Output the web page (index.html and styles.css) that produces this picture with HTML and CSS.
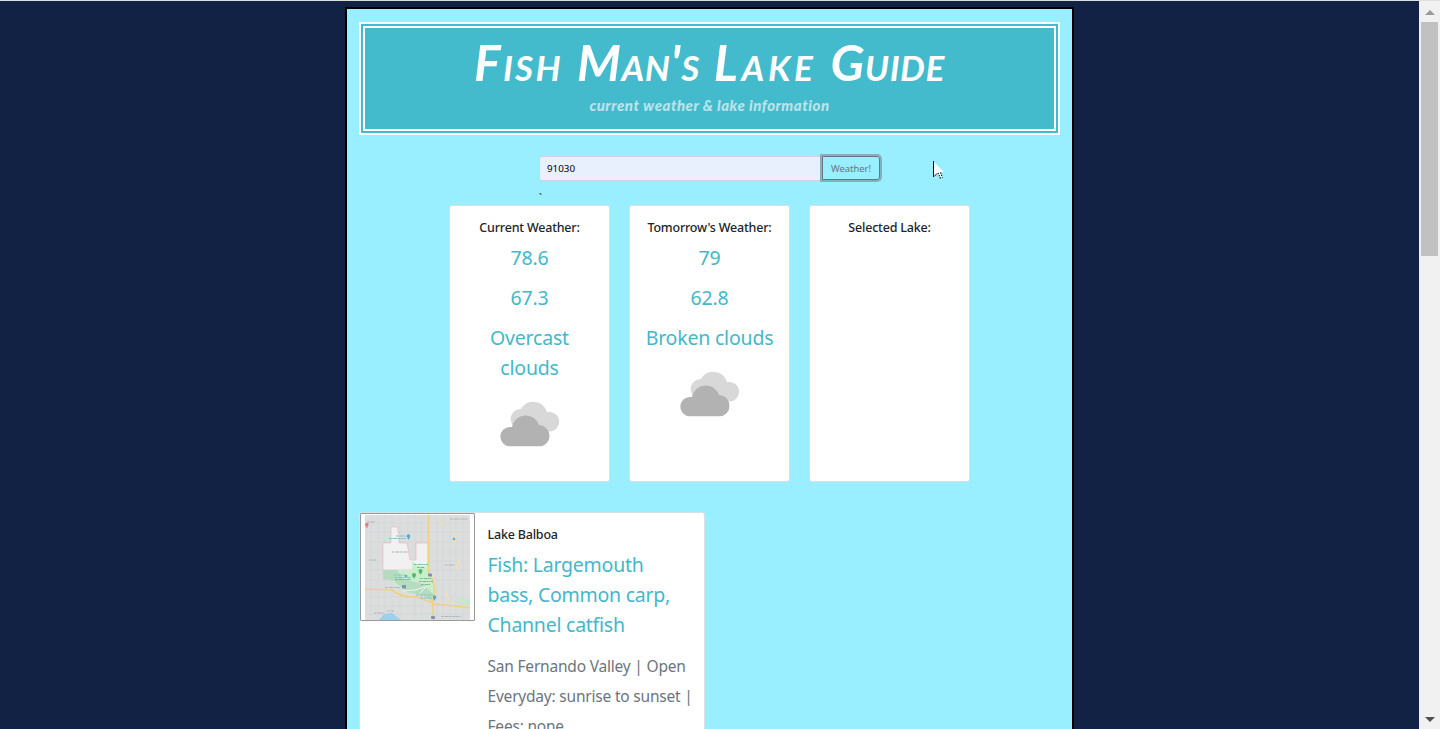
FILE: index.html
```html
<!DOCTYPE html>
<html lang="en">
<head>
<meta charset="utf-8">
<title>Fish Man's Lake Guide</title>
<link rel="stylesheet" href="styles.css">
</head>
<body>
<svg class="defs" aria-hidden="true">
  <symbol id="clouds" viewBox="0 0 60 46">
    <path class="cloud-back" d="M20 28a10 10 0 0 1-3-19.300 10 10 0 0 1 4-.7 14.200 14.200 0 0 1 26 3.200 9.800 9.800 0 1 1 2 19.300H20z"/>
    <path class="cloud-front" d="M10 45.300a9.700 9.700 0 0 1 0-19.400h2a14 14 0 0 1 27-2q10 1 10.500 11.200a10 10 0 0 1-10 10.200z"/>
  </symbol>
</svg>
<div class="window">
  <main class="stage">
    <div class="container">
      <header class="banner">
        <h1 class="title"><span class="wide">Fish</span> <span>Man's</span> <span class="wider">Lake</span> <span>Guide</span></h1>
        <p class="tagline">current weather &amp; lake information</p>
      </header>
      <form class="search">
        <input class="zip" type="text" value="91030" aria-label="Zip code">
        <button class="go" type="button">Weather!</button>
      </form>
      <p class="tick">`</p>
      <section class="cards">
        <article class="card">
          <h2 class="card-title">Current Weather:</h2>
          <p class="reading">78.6</p>
          <p class="reading">67.3</p>
          <p class="reading">Overcast clouds</p>
          <svg class="weather-icon"><use href="#clouds"/></svg>
        </article>
        <article class="card">
          <h2 class="card-title">Tomorrow's Weather:</h2>
          <p class="reading">79</p>
          <p class="reading">62.8</p>
          <p class="reading">Broken clouds</p>
          <svg class="weather-icon"><use href="#clouds"/></svg>
        </article>
        <article class="card">
          <h2 class="card-title">Selected Lake:</h2>
        </article>
      </section>
      <section class="lake">
        <div class="map-button">
          <svg class="map" viewBox="0 0 105 105">
            <rect width="105" height="105" fill="#dcdddd"/>
            <g stroke="#d3d5d6" stroke-width=".6" fill="none">
              <path d="M6 0v105M13 0v105M20 0v105M27 0v105M35 0v105M43 0v46M50 0v105M57 0v105M72 0v105M78 0v105M85 0v105M91 0v105M98 0v105M0 8h105M0 17h105M0 27h105M0 37h105M0 46h105M0 55h105M0 65h105M0 82h105M0 91h105M0 99h105"/>
            </g>
            <path d="M26 12h7v6h1v10h8l3 17h6V28h12v27H18V28h8z" fill="#f1f1f2" stroke="#e9bcbc" stroke-width=".7"/>
            <path d="M18 55h29V46l6 5h9l1 10 7 9-2 16-17-8-12-2-19-14z" fill="#c8efca"/>
            <path d="M18 55h14l6 9 20 5 10 10-1 7-10-6-15-3-13-11-11-2z" fill="#b5dcc0"/>
            <path d="M38 76l12-1 10-3M55 78l7-7" stroke="#f3f6e9" stroke-width="1" fill="none"/>
            <path d="M14 105l5-6 8-1 9 7z" fill="#9bd1ec"/>
            <path d="M90 87l6-5 6 3 3-1v6l-9-1z" fill="#c6e7c9"/>
            <path d="M63.500 0v57q6 10 6 19l-2 11 1 18M0 74l27 1q9 8 26 7l17 7 20 2 15 2" fill="none" stroke="#efd184" stroke-width="1.700"/>
            <path d="M76 6l2 4M91 18l-2 10M94 45l-3 10M80 78l4 6" stroke="#efe1b3" stroke-width="2"/>
            <g fill="#53aecb"><circle cx="43.500" cy="21" r="1.800"/><path d="M42 22h3l-1.500 3z"/><circle cx="69.500" cy="82" r="1.800"/><path d="M68 83h3l-1.500 3z"/><circle cx="89" cy="24" r="1.200"/><circle cx="41" cy="61" r="1.300"/></g>
            <g fill="#52b96d"><circle cx="49" cy="60" r="2"/><path d="M47.500 61h3l-1.500 3z"/><circle cx="55.500" cy="56" r="2"/><path d="M54 57h3l-1.500 3z"/></g>
            <g fill="#eb7c7c"><circle cx="1.800" cy="9.500" r="1.700"/><path d="M.5 10.500h2.800l-1.400 3z"/></g>
            <g fill="#7d91b5"><rect x="63" y="58.500" width="4" height="3" rx="1"/><rect x="66" y="101" width="4" height="3" rx="1"/><rect x="37" y="70" width="4" height="3.500" rx="1"/></g>
            <g fill="none" stroke-width="1.100" stroke-dasharray="2 .5 1 .6 3 .5">
              <path d="M31 21h10M24 23.500h17M51 80h17M55 83h12M29 60h11M30 62.500h16" stroke="#83bfc6"/>
              <path d="M49 49.500h14M52 52.500h7M55 63.500h11M54 66.500h14M56 69.500h9M30 64.500h16" stroke="#79b691"/>
              <path d="M27 37h16M2 7h8M85 4h18M4 45h7M9 98h10M20 72.500h15M76 101.500h20M80 50h10M22 96h7" stroke="#adb4c3"/>
            </g>
          </svg>
        </div>
        <div class="lake-info">
          <h2 class="card-title">Lake Balboa</h2>
          <p class="fish">Fish: Largemouth<br>bass, Common carp,<br>Channel catfish</p>
          <p class="details">San Fernando Valley | Open<br>Everyday: sunrise to sunset |<br>Fees: none</p>
        </div>
      </section>
    </div>
  </main>
  <aside class="scrollbar" aria-hidden="true">
    <svg class="arrow" viewBox="0 0 10 5"><path d="M5 0l5 5H0z" fill="#9a9a9a"/></svg>
    <div class="thumb"></div>
    <svg class="arrow" viewBox="0 0 10 5"><path d="M0 0h10L5 5z" fill="#505050"/></svg>
  </aside>
</div>
<svg class="cursor" viewBox="0 0 12 20"><path d="M1 1l10 10H7l2 5-2 1-2-5-4 4z" fill="#fff"/><path d="M.5 0v16M1 15.500l3-3" stroke="#000" fill="none"/><path d="M5 12l2.500 5.500M7.500 11.500l2 5" stroke="#000" stroke-width="1.200" stroke-dasharray="1.200 1.200"/></svg>
</body>
</html>
```
FILE: styles.css
```css
* { box-sizing: border-box; }
body {
  margin: 0;
  height: 729px;
  overflow: hidden;
  background: #112244;
  font-family: "Noto Sans", "Open Sans", sans-serif;
  color: #212529;
}
h1, h2, p { margin: 0; }
.defs { position: absolute; width: 0; height: 0; }
.window { display: flex; height: 729px; border-top: 1px solid #dcdfdf; overflow: hidden; }
.stage { flex: 1; display: flex; justify-content: center; padding-top: 6px; }
.container {
  width: 729px;
  height: 900px;
  padding: 13px 12px 0;
  border: 2px solid #000;
  background: #99eeff;
}
.banner {
  height: 113px;
  border: 6px double #fff;
  background: #44bbcc;
  text-align: center;
}
.title {
  display: flex;
  justify-content: center;
  gap: 14px;
  height: 64px;
  font-family: Lato, sans-serif;
  font-size: 50px;
  line-height: 68px;
  font-weight: 700;
  font-style: italic;
  font-variant: small-caps;
  letter-spacing: .6px;
  color: #fff;
}
.title .wide { letter-spacing: 2.300px; }
.title .wider { letter-spacing: 3.600px; }
.tagline {
  font-family: Lato, sans-serif;
  font-size: 15px;
  line-height: 26px;
  font-weight: 900;
  font-style: italic;
  letter-spacing: .5px;
  color: #b9e4eb;
}
.search { display: flex; width: 342px; height: 26px; margin: 20px 0 0 180px; }
.zip {
  width: 282px;
  height: 25px;
  margin-top: 1px;
  padding: 0 7px;
  border: 1px solid #ced4da;
  border-radius: 3px 0 0 3px;
  background: #e8f0fe;
  font: 9.800px "Noto Sans", sans-serif;
  color: #000;
}
.go {
  width: 58px;
  height: 24px;
  margin: 1px 0 0 1px;
  padding: 0;
  border: 1px solid #6c757d;
  border-radius: 0 3px 3px 0;
  background: transparent;
  box-shadow: 0 0 0 2px #84b0bd;
  font: 9.400px "Noto Sans", sans-serif;
  color: #6c757d;
}
.tick { height: 24px; margin-left: 180px; padding-top: 10px; font-size: 10px; line-height: 15px; }
.cards { display: flex; justify-content: center; gap: 19px; height: 277px; }
.card {
  width: 161px;
  padding: 14px 15px;
  border: 1px solid #d5e1e4;
  border-radius: 3px;
  background: #fff;
  text-align: center;
}
.card-title { font-size: 12.500px; line-height: 16px; font-weight: 500; letter-spacing: -.2px; }
.reading {
  margin: 0 -6px 10px;
  padding: 0 14px;
  font-size: 19.500px;
  line-height: 30px;
  letter-spacing: -.2px;
  color: #44b7cb;
}
.card-title + .reading { margin-top: 7px; }
.card:nth-child(2) .reading { padding: 0; }
.weather-icon { display: block; width: 60px; height: 46px; margin: 18px auto 0; }
.cloud-back { fill: #d8d8d8; }
.cloud-front { fill: #b2b2b2; }
.lake {
  display: flex;
  width: 346px;
  height: 360px;
  margin-top: 30px;
  border: 1px solid #d5e1e4;
  border-radius: 3px;
  background: #fff;
}
.map-button { width: 115px; height: 108px; padding: 1px 4px; border: 1px solid #999; border-radius: 1px; }
.map { display: block; width: 105px; height: 105px; }
.lake-info { flex: 1; padding: 14px 0 0 12.500px; white-space: nowrap; }
.fish { margin-top: 7px; font-size: 19.500px; line-height: 30px; letter-spacing: -.25px; color: #44b7cb; }
.details { margin-top: 11px; font-size: 15.500px; line-height: 30px; letter-spacing: -.2px; color: #6c757d; }
.scrollbar {
  display: flex;
  flex-direction: column;
  align-items: center;
  width: 21px;
  padding: 9px 0 7px;
  background: #f1f1f1;
}
.arrow { width: 10px; height: 5px; }
.thumb { width: 17px; height: 234px; margin: 7px 0 auto; background: #c1c1c1; }
.cursor { position: absolute; left: 933px; top: 161px; width: 12px; height: 20px; }
```
